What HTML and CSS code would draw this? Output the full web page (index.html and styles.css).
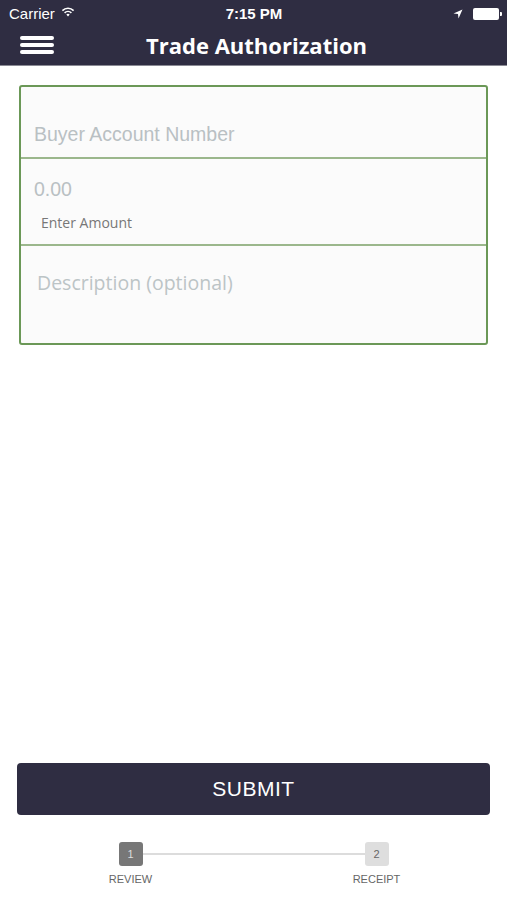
FILE: index.html
```html
<!DOCTYPE html>
<html lang="en">
<head>
    <meta charset="UTF-8">
    <meta name="viewport" content="width=device-width, initial-scale=1.0">
    <title>Trade Authorization</title>
    <link rel="stylesheet" href="styles.css">
</head>
<body>
    <div class="app">
        <!-- Header with status bar -->
        <header class="header">
            <div class="status-bar">
                <div class="status-left">
                    <span>Carrier</span>
                    <svg class="wifi" width="14" height="10" viewBox="0 0 14 10">
                        <path d="M7 9.5 L5.3 7.6 A2.5 2.5 0 0 1 8.7 7.6 Z" fill="#fff"/>
                        <path d="M3.6 5.9 A4.9 4.9 0 0 1 10.4 5.9" stroke="#fff" stroke-width="1.6" fill="none"/>
                        <path d="M1.4 3.6 A8 8 0 0 1 12.6 3.6" stroke="#fff" stroke-width="1.6" fill="none"/>
                    </svg>
                </div>
                <div class="status-time">7:15 PM</div>
                <div class="status-right">
                    <svg width="10" height="10" viewBox="0 0 10 10">
                        <path d="M9.5 0.5 L0.5 4.5 L5 5 L5.5 9.5 Z" fill="#fff"/>
                    </svg>
                    <div class="battery"></div>
                </div>
            </div>
            <div class="nav-bar">
                <div class="menu-btn">
                    <span></span><span></span><span></span>
                </div>
                <h1>Trade Authorization</h1>
            </div>
        </header>

        <!-- Trade form -->
        <form class="trade-form">
            <div class="field field-account">
                <input type="text" placeholder="Buyer Account Number">
            </div>
            <div class="field field-amount">
                <input type="text" placeholder="0.00">
                <label>Enter Amount</label>
            </div>
            <div class="field field-desc">
                <textarea placeholder="Description (optional)"></textarea>
            </div>
        </form>

        <div class="spacer"></div>

        <button class="submit-btn" type="button">SUBMIT</button>

        <!-- Progress steps -->
        <div class="steps">
            <div class="step">
                <div class="step-box active">1</div>
                <div class="step-label">REVIEW</div>
            </div>
            <div class="step-line"></div>
            <div class="step">
                <div class="step-box">2</div>
                <div class="step-label">RECEIPT</div>
            </div>
        </div>
    </div>
</body>
</html>
```

FILE: styles.css
```css
body {
    margin: 0;
    padding: 0;
    background: #ffffff;
    font-family: "Liberation Sans", Arial, sans-serif;
}
.app {
    display: flex;
    flex-direction: column;
    height: 900px;
}
.header {
    background-color: #2f2d42;
    color: white;
    border-bottom: 1px solid #8a8a94;
    height: 66px;
    box-sizing: border-box;
}
.status-bar {
    display: flex;
    align-items: center;
    justify-content: space-between;
    height: 27px;
    padding: 0 8px 0 9px;
    font-size: 15px;
}
.status-left {
    display: flex;
    align-items: center;
    gap: 6px;
    width: 120px;
}
.wifi {
    margin-top: -3px;
}
.status-time {
    font-weight: bold;
    font-size: 15px;
}
.status-right {
    display: flex;
    align-items: center;
    justify-content: flex-end;
    gap: 10px;
    width: 120px;
}
.battery {
    width: 26px;
    height: 12px;
    background: #fff;
    border-radius: 2px;
    position: relative;
}
.battery::after {
    content: "";
    position: absolute;
    right: -3px;
    top: 4px;
    width: 2px;
    height: 4px;
    background: #fff;
    border-radius: 0 1px 1px 0;
}
.nav-bar {
    display: flex;
    align-items: center;
    justify-content: center;
    height: 38px;
    position: relative;
}
.menu-btn {
    position: absolute;
    left: 20px;
    top: 9px;
    display: flex;
    flex-direction: column;
    gap: 3px;
}
.menu-btn span {
    display: block;
    width: 34px;
    height: 4px;
    background: #fff;
    border-radius: 2px;
}
.nav-bar h1 {
    margin: -2px 0 0 6px;
    font-family: "Open Sans", sans-serif;
    font-size: 22px;
    font-weight: bold;
}
.trade-form {
    margin: 19px 19px 0 19px;
    border: 2px solid #6b9857;
    border-radius: 3px;
    background: #fbfbfb;
    height: 260px;
    box-sizing: border-box;
    display: flex;
    flex-direction: column;
}
.field {
    border-bottom: 2px solid #9bb78c;
}
.field input, .field textarea {
    border: none;
    background: transparent;
    outline: none;
    width: 100%;
    box-sizing: border-box;
    padding: 0;
    font-size: 19.5px;
    font-family: "Liberation Sans", Arial, sans-serif;
    color: #333;
}
.field input::placeholder {
    color: #b9c0c3;
}
.field-account {
    height: 72px;
    padding: 36px 0 0 13px;
    box-sizing: border-box;
}
.field-amount {
    height: 87px;
    padding: 19px 0 0 13px;
    box-sizing: border-box;
}
.field-amount label {
    display: block;
    margin: 12px 0 0 7px;
    font-family: "Open Sans", sans-serif;
    font-size: 14px;
    color: #777;
}
.field-desc {
    border-bottom: none;
    flex: 1;
    padding: 23px 0 0 16px;
}
.field-desc textarea {
    font-family: "Open Sans", sans-serif;
    resize: none;
    height: 60px;
}
.field-desc textarea::placeholder {
    color: #bcc4c6;
}
.spacer {
    flex: 1;
}
.submit-btn {
    margin: 0 17px;
    height: 52px;
    background-color: #2f2d42;
    color: #fff;
    border: none;
    border-radius: 4px;
    font-size: 21px;
    font-family: "Liberation Sans", Arial, sans-serif;
    letter-spacing: 0.5px;
}
.steps {
    display: flex;
    align-items: flex-start;
    justify-content: center;
    margin: 27px 0 15px 0;
}
.step {
    display: flex;
    flex-direction: column;
    align-items: center;
    width: 24px;
}
.step-box {
    width: 24px;
    height: 24px;
    border-radius: 3px;
    background: #dedede;
    color: #666;
    font-size: 11px;
    display: flex;
    align-items: center;
    justify-content: center;
}
.step-box.active {
    background: #777;
    color: #ddd;
}
.step-label {
    margin-top: 7px;
    font-size: 11px;
    color: #666;
    white-space: nowrap;
}
.step-line {
    width: 222px;
    height: 2px;
    background: #dcdcdc;
    margin-top: 11px;
}
```
